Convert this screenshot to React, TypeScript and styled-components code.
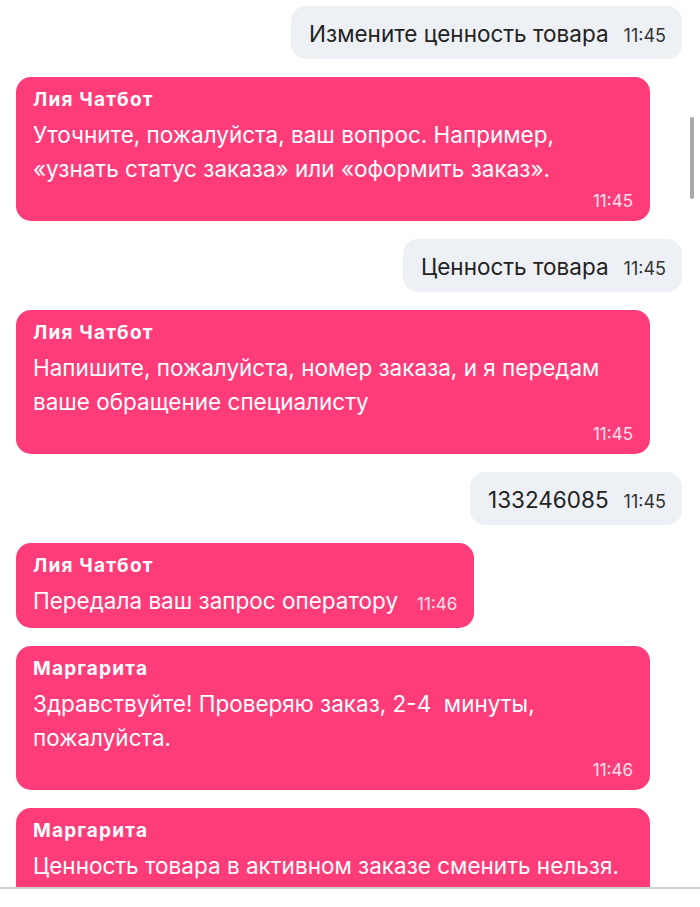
import React from 'react';
import styled, { createGlobalStyle } from 'styled-components';

const GlobalStyle = createGlobalStyle`
  html, body {
    margin: 0;
    padding: 0;
    background: #ffffff;
  }
  body {
    font-family: Inter, "Noto Sans", "DejaVu Sans", sans-serif;
    -webkit-font-smoothing: antialiased;
  }
`;

const Screen = styled.div`
  position: relative;
  width: 700px;
  height: 907px;
  background: #fff;
  overflow: hidden;
`;

const Feed = styled.div`
  height: 889px;
  border-bottom: 2px solid #cfcfcf;
  overflow: hidden;
  display: flex;
  flex-direction: column;
  gap: 18px;
  padding: 6px 18px 0 16px;
  box-sizing: border-box;
`;

const ScrollThumb = styled.div`
  position: absolute;
  top: 117px;
  right: 6px;
  width: 4px;
  height: 82px;
  border-radius: 2px;
  background: #a9a9a9;
`;

const OutBubble = styled.div`
  align-self: flex-end;
  display: flex;
  align-items: flex-end;
  gap: 15px;
  background: #edf0f4;
  border-radius: 15px;
  padding: 11px 16px 9px 18px;
  color: #222;
`;

const OutText = styled.span`
  font-size: 22.5px;
  line-height: 33px;
`;

const OutTime = styled.span`
  font-size: 18px;
  line-height: 20px;
  color: #333;
  padding-bottom: 4px;
`;

const InBubble = styled.div`
  align-self: flex-start;
  max-width: 634px;
  box-sizing: border-box;
  background: #ff3c7a;
  border-radius: 15px;
  padding: 10px 17px 10px 17px;
  color: #fff;
`;

const Author = styled.div`
  font-size: 19px;
  font-weight: 700;
  line-height: 26px;
  letter-spacing: 1.2px;
  margin-bottom: 5px;
`;

const Body = styled.div<{ $inline?: boolean }>`
  display: flex;
  align-items: flex-end;
  flex-wrap: ${p => (p.$inline ? 'nowrap' : 'wrap')};
  gap: ${p => (p.$inline ? '19px' : '0')};
`;

const InText = styled.div<{ $inline?: boolean }>`
  font-size: 22.5px;
  line-height: 34px;
  ${p => (p.$inline ? '' : 'width: 100%;')}
`;

const InTime = styled.div<{ $inline?: boolean }>`
  font-size: 17px;
  line-height: 20px;
  color: #ffe3ec;
  ${p => (p.$inline ? 'padding-bottom: 4px;' : 'width: 100%; text-align: right; margin-top: 5px;')}
`;

type Msg =
  | { kind: 'out'; text: string; time: string }
  | { kind: 'in'; author: string; text: React.ReactNode; time?: string; inline?: boolean };

const messages: Msg[] = [
  { kind: 'out', text: 'Измените ценность товара', time: '11:45' },
  {
    kind: 'in',
    author: 'Лия Чатбот',
    text: 'Уточните, пожалуйста, ваш вопрос. Например, «узнать статус заказа» или «оформить заказ».',
    time: '11:45',
  },
  { kind: 'out', text: 'Ценность товара', time: '11:45' },
  {
    kind: 'in',
    author: 'Лия Чатбот',
    text: 'Напишите, пожалуйста, номер заказа, и я передам ваше обращение специалисту',
    time: '11:45',
  },
  { kind: 'out', text: '133246085', time: '11:45' },
  { kind: 'in', author: 'Лия Чатбот', text: 'Передала ваш запрос оператору', time: '11:46', inline: true },
  {
    kind: 'in',
    author: 'Маргарита',
    text: 'Здравствуйте! Проверяю заказ, 2-4\u00a0 минуты, пожалуйста.',
    time: '11:46',
  },
  {
    kind: 'in',
    author: 'Маргарита',
    text: 'Ценность товара в активном заказе сменить нельзя. Вы можете отменить заказ и оформить новый.',
    time: '11:47',
  },
];

export default function App() {
  return (
    <Screen>
      <GlobalStyle />
      <Feed>
        {messages.map((m, i) =>
          m.kind === 'out' ? (
            <OutBubble key={i}>
              <OutText>{m.text}</OutText>
              <OutTime>{m.time}</OutTime>
            </OutBubble>
          ) : (
            <InBubble key={i}>
              <Author>{m.author}</Author>
              <Body $inline={m.inline}>
                <InText $inline={m.inline}>{m.text}</InText>
                {m.time && <InTime $inline={m.inline}>{m.time}</InTime>}
              </Body>
            </InBubble>
          )
        )}
      </Feed>
      <ScrollThumb />
    </Screen>
  );
}
